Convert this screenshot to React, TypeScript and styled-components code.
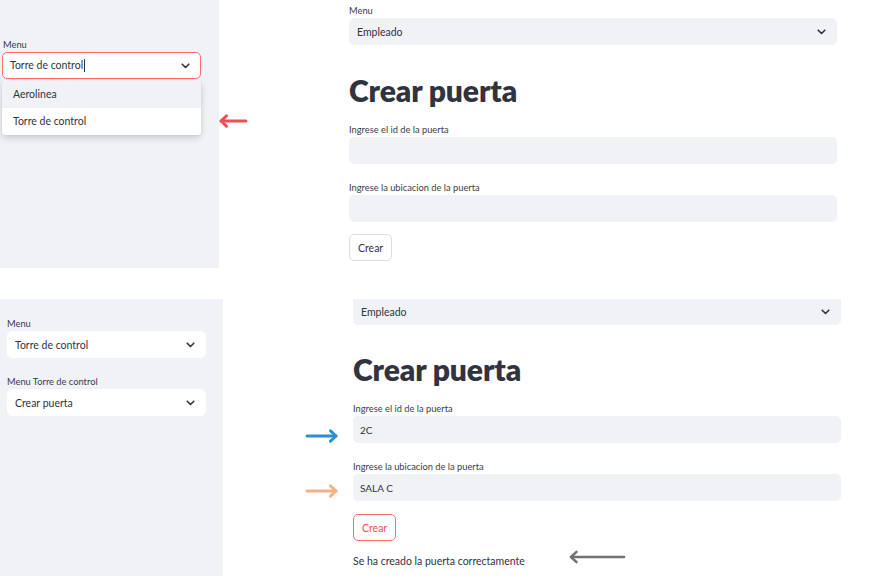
import React from "react";
import styled, { createGlobalStyle } from "styled-components";

const Global = createGlobalStyle`
  html, body { margin: 0; padding: 0; background: #ffffff; }
  body { font-family: "Lato", "Noto Sans", sans-serif; color: #31333f; }
  * { box-sizing: border-box; }
`;

const Page = styled.div`
  width: 889px;
  height: 586px;
  display: flex;
  flex-direction: column;
  gap: 31px;
  overflow: hidden;
`;

const Shot = styled.div<{ $h: number }>`
  position: relative;
  display: flex;
  flex: none;
  height: ${(p) => p.$h}px;
`;

const Sidebar = styled.div<{ $w: number; $pt: number; $pl: number; $inner: number }>`
  width: ${(p) => p.$w}px;
  flex: none;
  background: #f0f2f6;
  padding: ${(p) => p.$pt}px 0 0 ${(p) => p.$pl}px;
  display: flex;
  flex-direction: column;
  & > * { width: ${(p) => p.$inner}px; }
`;

const Main = styled.div<{ $pl: number; $pt: number }>`
  flex: none;
  width: 488px;
  margin-left: ${(p) => p.$pl}px;
  padding-top: ${(p) => p.$pt}px;
  display: flex;
  flex-direction: column;
`;

const Field = styled.div<{ $mb?: number }>`
  position: relative;
  display: flex;
  flex-direction: column;
  margin-bottom: ${(p) => p.$mb ?? 0}px;
`;

const Label = styled.div`
  font-size: 9.3px;
  line-height: 11px;
  color: #3a3c48;
  margin-bottom: 2px;
`;

const SelectBox = styled.div<{ $bg: string; $focus?: boolean; $cut?: boolean }>`
  height: ${(p) => (p.$cut ? 26 : 27)}px;
  border-radius: ${(p) => (p.$cut ? "0 0 5px 5px" : "5px")};
  background: ${(p) => p.$bg};
  border: 1px solid ${(p) => (p.$focus ? "#ff6c6c" : p.$bg)};
  display: flex;
  align-items: center;
  justify-content: space-between;
  padding: 0 10px 0 7px;
  font-size: 10.5px;
  color: #31333f;
`;

const Caret = styled.span`
  display: inline-block;
  width: 1px;
  height: 13px;
  background: #31333f;
  margin-left: 1px;
  vertical-align: middle;
`;

const Chevron = () => (
  <svg width="9" height="6" viewBox="0 0 9 6" fill="none">
    <path d="M1.2 1.2 L4.5 4.5 L7.8 1.2" stroke="#31333f" strokeWidth="1.6" strokeLinecap="round" strokeLinejoin="round" />
  </svg>
);

const Menu = styled.div`
  position: absolute;
  left: 0;
  right: 0;
  top: 41px;
  background: #ffffff;
  border-radius: 4px;
  box-shadow: 0 3px 7px rgba(0, 0, 0, 0.16), 0 0 2px rgba(0, 0, 0, 0.08);
  overflow: hidden;
  z-index: 2;
`;

const MenuItem = styled.div<{ $active?: boolean }>`
  height: 27.5px;
  display: flex;
  align-items: center;
  padding-left: 11px;
  font-size: 10.5px;
  color: #31333f;
  background: ${(p) => (p.$active ? "#f0f2f6" : "#ffffff")};
`;

const Heading = styled.h1`
  margin: 0;
  font-size: 30px;
  line-height: 36px;
  font-weight: 800;
  color: #31333f;
  letter-spacing: -0.1px;
`;

const Input = styled.div`
  height: 27px;
  border-radius: 5px;
  background: #f0f2f6;
  display: flex;
  align-items: center;
  padding-left: 7px;
  font-size: 10px;
  color: #31333f;
`;

const Button = styled.div<{ $active?: boolean }>`
  align-self: flex-start;
  height: 27px;
  padding: 0 8px;
  display: flex;
  align-items: center;
  border-radius: 5px;
  background: #ffffff;
  border: 1px solid ${(p) => (p.$active ? "#ff6c6c" : "#dcdde2")};
  color: ${(p) => (p.$active ? "#ff4b4b" : "#31333f")};
  font-size: 10.5px;
`;

const Message = styled.div`
  font-size: 10.5px;
  line-height: 14px;
  color: #31333f;
`;

const Arrow = styled.svg<{ $x: number; $y: number }>`
  position: absolute;
  left: ${(p) => p.$x}px;
  top: ${(p) => p.$y}px;
  overflow: visible;
`;

const ArrowLeft = ({ x, y, w, color, sw }: { x: number; y: number; w: number; color: string; sw: number }) => (
  <Arrow $x={x} $y={y} width={w} height="14" viewBox={`0 0 ${w} 14`}>
    <path d={`M${w - 1} 7 H2`} stroke={color} strokeWidth={sw} strokeLinecap="round" />
    <path d="M7.5 1.8 L2 7 L7.5 12.2" stroke={color} strokeWidth={sw} fill="none" strokeLinecap="round" strokeLinejoin="round" />
  </Arrow>
);

const ArrowRight = ({ x, y, w, color, sw }: { x: number; y: number; w: number; color: string; sw: number }) => (
  <Arrow $x={x} $y={y} width={w} height="14" viewBox={`0 0 ${w} 14`}>
    <path d={`M1 7 H${w - 2}`} stroke={color} strokeWidth={sw} strokeLinecap="round" />
    <path d={`M${w - 7.5} 1.8 L${w - 2} 7 L${w - 7.5} 12.2`} stroke={color} strokeWidth={sw} fill="none" strokeLinecap="round" strokeLinejoin="round" />
  </Arrow>
);

export default function App() {
  return (
    <>
      <Global />
      <Page>
        <Shot $h={268}>
          <Sidebar $w={219} $pt={39} $pl={2} $inner={199}>
            <Field>
              <Label style={{ paddingLeft: 1 }}>Menu</Label>
              <SelectBox $bg="#ffffff" $focus>
                <span>
                  Torre de control
                  <Caret />
                </span>
                <Chevron />
              </SelectBox>
              <Menu>
                <MenuItem $active>Aerolinea</MenuItem>
                <MenuItem>Torre de control</MenuItem>
              </Menu>
            </Field>
          </Sidebar>
          <Main $pl={130} $pt={5}>
            <Field $mb={27}>
              <Label>Menu</Label>
              <SelectBox $bg="#f0f2f6">
                <span>Empleado</span>
                <Chevron />
              </SelectBox>
            </Field>
            <Heading>Crear puerta</Heading>
            <Field $mb={18} style={{ marginTop: 16 }}>
              <Label>Ingrese el id de la puerta</Label>
              <Input />
            </Field>
            <Field $mb={12}>
              <Label>Ingrese la ubicacion de la puerta</Label>
              <Input />
            </Field>
            <Button>Crear</Button>
          </Main>
          <ArrowLeft x={219} y={114} w={28} color="#f04e55" sw={3} />
        </Shot>
        <Shot $h={277}>
          <Sidebar $w={223} $pt={19} $pl={7} $inner={199}>
            <Field $mb={18}>
              <Label>Menu</Label>
              <SelectBox $bg="#ffffff">
                <span>Torre de control</span>
                <Chevron />
              </SelectBox>
            </Field>
            <Field>
              <Label>Menu Torre de control</Label>
              <SelectBox $bg="#ffffff">
                <span>Crear puerta</span>
                <Chevron />
              </SelectBox>
            </Field>
          </Sidebar>
          <Main $pl={130} $pt={0}>
            <Field $mb={26}>
              <SelectBox $bg="#f0f2f6" $cut>
                <span>Empleado</span>
                <Chevron />
              </SelectBox>
            </Field>
            <Heading>Crear puerta</Heading>
            <Field $mb={18} style={{ marginTop: 16 }}>
              <Label>Ingrese el id de la puerta</Label>
              <Input>2C</Input>
            </Field>
            <Field $mb={13}>
              <Label>Ingrese la ubicacion de la puerta</Label>
              <Input>SALA C</Input>
            </Field>
            <Button $active>Crear</Button>
            <Message style={{ marginTop: 13 }}>Se ha creado la puerta correctamente</Message>
          </Main>
          <ArrowRight x={306} y={130} w={32} color="#2b8fd0" sw={3} />
          <ArrowRight x={306} y={185} w={32} color="#f5b183" sw={3} />
          <ArrowLeft x={569} y={251} w={56} color="#707070" sw={2.5} />
        </Shot>
      </Page>
    </>
  );
}
